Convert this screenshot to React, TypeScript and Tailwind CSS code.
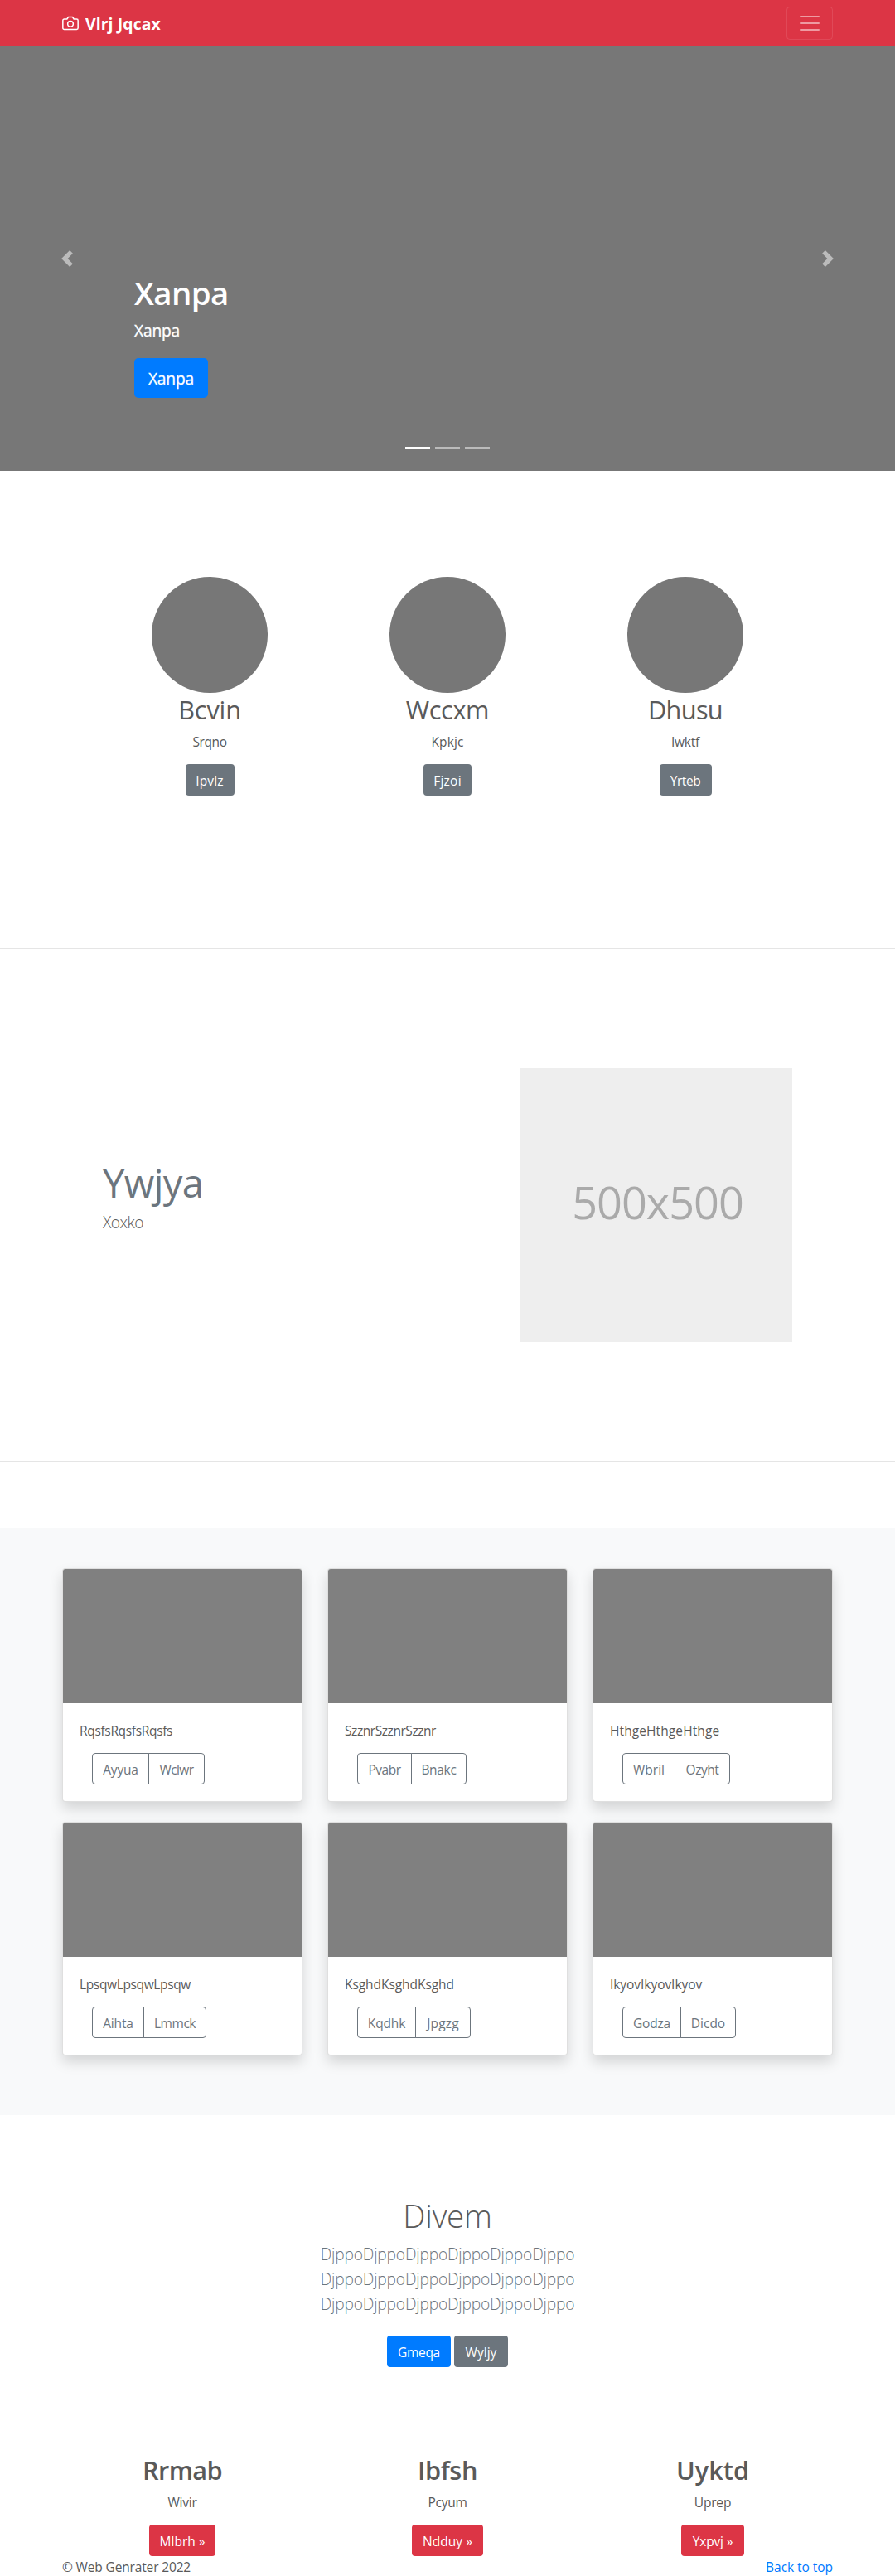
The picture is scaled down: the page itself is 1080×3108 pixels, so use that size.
import type { ReactNode } from "react";

const btn =
  "inline-flex h-[38px] items-center justify-center rounded pt-0.5 text-[15.5px] leading-6 whitespace-nowrap";

function Navbar() {
  return (
    <nav className="flex h-14 items-center justify-between bg-[#dc3545] px-[75px]">
      <a className="flex items-center text-white">
        <svg
          className="mr-2 h-5 w-5"
          viewBox="0 0 24 24"
          fill="none"
          stroke="currentColor"
          strokeWidth="1.8"
          strokeLinecap="round"
          strokeLinejoin="round"
        >
          <path d="M23 19a2 2 0 0 1-2 2H3a2 2 0 0 1-2-2V8a2 2 0 0 1 2-2h4l2-3h6l2 3h4a2 2 0 0 1 2 2z" />
          <circle cx="12" cy="13" r="4" />
        </svg>
        <span className="pt-0.5 text-[19.4px] leading-[30px] font-bold tracking-[0.1px]">Vlrj Jqcax</span>
      </a>
      <button className="flex h-10 w-14 items-center justify-center rounded border border-white/10">
        <svg
          className="h-[30px] w-[30px]"
          viewBox="0 0 30 30"
          stroke="rgba(255,255,255,0.5)"
          strokeWidth="2"
          strokeLinecap="round"
          strokeMiterlimit="10"
        >
          <path d="M4 7h22M4 15h22M4 23h22" />
        </svg>
      </button>
    </nav>
  );
}

function Chevron({ d }: { d: string }) {
  return (
    <svg className="h-5 w-5 opacity-50" viewBox="0 0 8 8" fill="#fff">
      <path d={d} />
    </svg>
  );
}

function Hero() {
  return (
    <header className="relative flex h-[512px] justify-between bg-[#777]">
      <div className="flex w-[162px] items-center justify-center">
        <Chevron d="M5.25 0l-4 4 4 4 1.5-1.5-2.5-2.5 2.5-2.5-1.5-1.5z" />
      </div>
      <div className="flex-1 pt-[270px] text-white">
        <h1 className="h-12 text-[38.4px] leading-[54px] font-semibold tracking-[-0.6px]">Xanpa</h1>
        <p className="mt-2 h-[30px] text-[19.2px] leading-[33px] tracking-[-0.16px] [-webkit-text-stroke:0.35px_white]">
          Xanpa
        </p>
        <button className="mt-5 flex h-12 w-[89px] items-center justify-center rounded-[5px] bg-[#007bff] pt-0.5 text-[19.2px] leading-[30px] tracking-[-0.16px] [-webkit-text-stroke:0.3px_white]">
          Xanpa
        </button>
      </div>
      <div className="flex w-[162px] items-center justify-center">
        <Chevron d="M2.75 0l-1.5 1.5 2.5 2.5-2.5 2.5 1.5 1.5 4-4-4-4z" />
      </div>
      <div className="absolute inset-x-0 bottom-[26px] flex justify-center gap-1.5">
        <span className="h-[3px] w-[30px] bg-white" />
        <span className="h-[3px] w-[30px] bg-white/50" />
        <span className="h-[3px] w-[30px] bg-white/50" />
      </div>
    </header>
  );
}

const features = [
  { title: "Bcvin", tt: "tracking-[-0.16px]", text: "Srqno", pt: "tracking-[-0.38px]", label: "Ipvlz", bt: "w-[59px] tracking-[0.15px]" },
  { title: "Wccxm", tt: "tracking-[-0.39px]", text: "Kpkjc", pt: "tracking-[0.1px]", label: "Fjzoi", bt: "w-[58px] tracking-[0.25px]" },
  { title: "Dhusu", tt: "tracking-[-0.65px]", text: "Iwktf", pt: "tracking-[-0.2px]", label: "Yrteb", bt: "w-[63px] tracking-[-0.4px]" },
];

function Features() {
  return (
    <section className="flex h-[576px] justify-center pt-32">
      {features.map((f) => (
        <div key={f.title} className="flex w-[287px] flex-col items-center">
          <div className="h-[140px] w-[140px] rounded-full bg-[#777]" />
          <h2 className={`h-[38px] text-[30.7px] leading-[41px] ${f.tt}`}>{f.title}</h2>
          <p className={`mt-2 h-6 text-[15.5px] leading-[26px] ${f.pt}`}>{f.text}</p>
          <button className={`${btn} mt-4 bg-[#6c757d] text-white ${f.bt}`}>{f.label}</button>
        </div>
      ))}
    </section>
  );
}

function Featurette() {
  return (
    <section className="flex h-[620px] justify-between border-y border-black/10 pt-[144px] pr-[124px] pl-[124px]">
      <div className="pt-[106px]">
        <h2 className="h-[60px] text-[47.2px] leading-[65px] tracking-[-0.7px] text-[#6c757d]">Ywjya</h2>
        <p className="mt-[3px] text-[19.2px] leading-[34px] font-light tracking-[-0.55px]">Xoxko</p>
      </div>
      <div className="flex h-[330px] w-[329px] items-center justify-center bg-[#eee] pb-2 pl-1 text-[54px] leading-none tracking-[-1px] text-[#aaa]">
        500x500
      </div>
    </section>
  );
}

type Card = { text: string; tt: string; a: string; at: string; b: string; bt: string };

const cards: Card[] = [
  { text: "RqsfsRqsfsRqsfs", tt: "tracking-[-0.33px]", a: "Ayyua", at: "w-[69px] tracking-[-0.2px]", b: "Wclwr", bt: "w-[68px] tracking-[-0.62px]" },
  { text: "SzznrSzznrSzznr", tt: "tracking-[-0.44px]", a: "Pvabr", at: "w-[66px] tracking-[-0.5px]", b: "Bnakc", bt: "w-[67px] tracking-[-0.3px]" },
  { text: "HthgeHthgeHthge", tt: "tracking-[0.1px]", a: "Wbril", at: "w-[64px] tracking-[0.02px]", b: "Ozyht", bt: "w-[67px] tracking-[-0.47px]" },
  { text: "LpsqwLpsqwLpsqw", tt: "tracking-[-0.36px]", a: "Aihta", at: "w-[63px] tracking-[-0.17px]", b: "Lmmck", bt: "w-[76px] tracking-[-0.45px]" },
  { text: "KsghdKsghdKsghd", tt: "tracking-[-0.06px]", a: "Kqdhk", at: "w-[71px] tracking-[-0.15px]", b: "Jpgzg", bt: "w-[67px] tracking-[0.18px]" },
  { text: "IkyovIkyovIkyov", tt: "tracking-[-0.05px]", a: "Godza", at: "w-[71px] tracking-[-0.2px]", b: "Dicdo", bt: "w-[67px]" },
];

function Album() {
  return (
    <section className="mt-20 bg-[#f8f9fa] px-[75px] pt-12 pb-[72px]">
      <div className="grid grid-cols-3 gap-x-[30px] gap-y-6">
        {cards.map((c) => (
          <article
            key={c.text}
            className="h-[282px] rounded border border-black/[.125] bg-white shadow-[0_8px_16px_rgba(0,0,0,0.15)]"
          >
            <div className="h-[162px] rounded-t-[3px] bg-[#808080]" />
            <div className="p-5">
              <p className={`h-6 text-[15.5px] leading-[26px] ${c.tt}`}>{c.text}</p>
              <div className="mt-4 ml-[15px] flex text-[#6c757d]">
                <button className={`${btn} rounded-r-none border border-[#6c757d] ${c.at}`}>{c.a}</button>
                <button className={`${btn} -ml-px rounded-l-none border border-[#6c757d] ${c.bt}`}>{c.b}</button>
              </div>
            </div>
          </article>
        ))}
      </div>
    </section>
  );
}

function Intro() {
  const line = "DjppoDjppoDjppoDjppoDjppoDjppo";
  return (
    <section className="flex flex-col items-center pt-24">
      <h1 className="h-12 text-[38.4px] leading-[51px] font-light tracking-[-0.2px]">Divem</h1>
      <div className="mt-2 h-[90px] pt-px text-[19.2px] leading-[30px] font-light tracking-[-0.18px] text-[#6c757d]">
        <p>{line}</p>
        <p>{line}</p>
        <p>{line}</p>
      </div>
      <div className="mt-6 flex gap-1 text-white">
        <button className={`${btn} w-[77px] bg-[#007bff] tracking-[-0.33px]`}>Gmeqa</button>
        <button className={`${btn} w-[65px] bg-[#6c757d] tracking-[0.02px]`}>Wyljy</button>
      </div>
    </section>
  );
}

function Column({ title, text, children }: { title: ReactNode; text: ReactNode; children: ReactNode }) {
  return (
    <div className="flex flex-col items-center">
      <h2 className="h-[38px] text-[30.7px] leading-[40px] font-semibold">{title}</h2>
      <p className="mt-2 mb-4 h-6 text-[15.5px] leading-[26px]">{text}</p>
      {children}
    </div>
  );
}

function Columns() {
  return (
    <section className="grid grid-cols-3 px-[60px] pt-[104px]">
      <Column title={<span className="tracking-[-0.65px]">Rrmab</span>} text={<span className="tracking-[-0.25px]">Wivir</span>}>
        <button className={`${btn} w-[80px] bg-[#dc3545] text-white`}>Mlbrh »</button>
      </Column>
      <Column title={<span className="tracking-[-0.39px]">Ibfsh</span>} text={<span className="tracking-[-0.24px]">Pcyum</span>}>
        <button className={`${btn} w-[86px] bg-[#dc3545] tracking-[0.02px] text-white`}>Ndduy »</button>
      </Column>
      <Column title="Uyktd" text={<span className="tracking-[-0.18px]">Uprep</span>}>
        <button className={`${btn} w-[76px] bg-[#dc3545] tracking-[-0.14px] text-white`}>Yxpvj »</button>
      </Column>
    </section>
  );
}

export default function App() {
  return (
    <div className="w-[1080px] bg-white font-['Open_Sans','Noto_Sans',sans-serif] text-[#5a5a5a]">
      <Navbar />
      <Hero />
      <Features />
      <Featurette />
      <Album />
      <Intro />
      <Columns />
      <footer className="flex h-6 justify-between overflow-hidden px-[75px] text-[15.5px] leading-[26px]">
        <p className="tracking-[-0.15px]">© Web Genrater 2022</p>
        <a className="tracking-[-0.05px] text-[#007bff]">Back to top</a>
      </footer>
    </div>
  );
}
